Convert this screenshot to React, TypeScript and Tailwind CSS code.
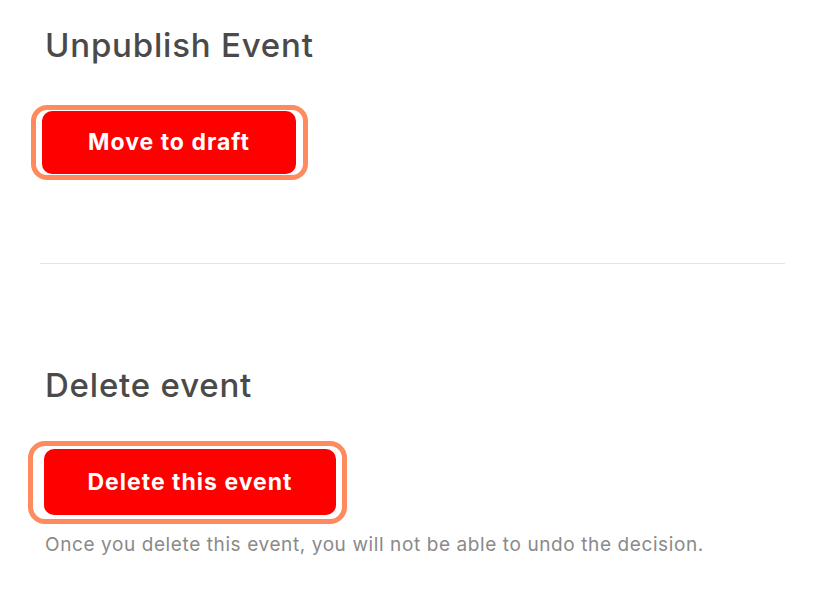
export default function App() {
  const font = { fontFamily: '"Inter", "Liberation Sans", sans-serif' };
  return (
    <div className="w-[816px] h-[615px] bg-white" style={font}>
      <div className="pl-[40px] pr-[31px] pt-[25px]">
        <h2 className="pl-[5px] text-[33px] leading-[40px] font-medium tracking-[0.8px] text-[#4a4a4a]">Unpublish Event</h2>
        <div className="mt-[40px] ml-[-9px] flex">
          <div className="flex border-[5px] border-[#ff8a5e] rounded-[16px] pl-[6px] pr-[7px] py-[1px]">
            <button className="h-[63px] w-[254px] rounded-[10px] bg-[#ff0000] text-white text-[23px] font-bold tracking-[1px]">
              Move to draft
            </button>
          </div>
        </div>
        <div className="mt-[83px] h-[1px] bg-[#e3e3e3]" />
        <h2 className="mt-[101px] pl-[5px] text-[33px] leading-[40px] font-medium tracking-[0.8px] text-[#4a4a4a]">Delete event</h2>
        <div className="mt-[36px] ml-[-12px] flex">
          <div className="flex border-[5px] border-[#ff8a5e] rounded-[17px] pl-[11px] pr-[6px] pt-[3px] pb-[4px]">
            <button className="h-[66px] w-[292px] rounded-[10px] bg-[#ff0000] text-white text-[23px] font-bold tracking-[1px]">
              Delete this event
            </button>
          </div>
        </div>
        <p className="mt-[9px] pl-[5px] text-[19px] leading-[24px] tracking-[0.6px] text-[#8a8a8a]">
          Once you delete this event, you will not be able to undo the decision.
        </p>
      </div>
    </div>
  );
}
